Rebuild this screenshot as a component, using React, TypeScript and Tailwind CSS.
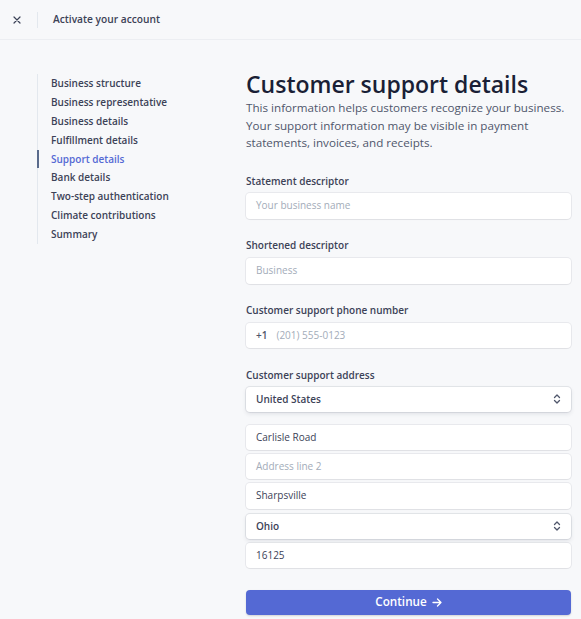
import React from "react";

const font = { fontFamily: '"Open Sans", "Noto Sans", sans-serif' };

function UpDown() {
  return (
    <svg width="8" height="10" viewBox="0 0 8 10" fill="none" stroke="#4f566b" strokeWidth="1.3" strokeLinecap="round" strokeLinejoin="round">
      <path d="M1.5 3.5 L4 1 L6.5 3.5" />
      <path d="M1.5 6.5 L4 9 L6.5 6.5" />
    </svg>
  );
}

function Field({ children, className = "" }: { children: React.ReactNode; className?: string }) {
  return (
    <div
      className={`bg-white rounded-[4px] flex items-center px-[10px] text-[10px] shadow-[0_0_0_1px_rgba(60,66,87,0.08),0_1px_1px_rgba(0,0,0,0.04)] ${className}`}
    >
      {children}
    </div>
  );
}

function SelectField({ value }: { value: string }) {
  return (
    <div className="h-[25px] bg-white rounded-[4px] flex items-center justify-between px-[10px] text-[10px] font-semibold text-[#3c4257] shadow-[0_0_0_1px_rgba(60,66,87,0.10),0_2px_4px_rgba(60,66,87,0.12)]">
      <span>{value}</span>
      <UpDown />
    </div>
  );
}

const steps = [
  "Business structure",
  "Business representative",
  "Business details",
  "Fulfillment details",
  "Support details",
  "Bank details",
  "Two-step authentication",
  "Climate contributions",
  "Summary",
];

export default function App() {
  return (
    <div className="w-[581px] h-[619px] bg-[#f7f8fa] overflow-hidden" style={font}>
      <div className="h-10 flex items-center border-b border-[#eceef2]">
        <div className="w-[33px] flex justify-center">
          <svg width="8" height="8" viewBox="0 0 8 8" stroke="#3c4257" strokeWidth="1.2" strokeLinecap="round">
            <path d="M1 1 L7 7 M7 1 L1 7" />
          </svg>
        </div>
        <div className="ml-[4px] w-px h-[16px] bg-[#e3e8ee]" />
        <div className="ml-[15px] text-[10.2px] font-semibold text-[#3c4257]">Activate your account</div>
      </div>
      <div className="flex">
        <div className="ml-[37px] w-[209px] pt-[34px]">
          <ul className="border-l border-[#e3e8ee]">
            {steps.map((s) => {
              const active = s === "Support details";
              return (
                <li
                  key={s}
                  className={`h-[18.9px] leading-[18.9px] pl-[13px] text-[10px] font-semibold ${
                    active ? "text-[#5469d4] border-l-2 border-[#5a6b8c] -ml-[1px]" : "text-[#3c4257]"
                  }`}
                >
                  <span className={active ? "-ml-[1px]" : ""}>{s}</span>
                </li>
              );
            })}
          </ul>
        </div>
        <div className="w-[325px] pt-[30px]">
          <h1 className="text-[23px] leading-[28px] font-semibold text-[#1a1f36]">Customer support details</h1>
          <p className="mt-[1px] text-[11.65px] leading-[17.5px] text-[#4f566b]">
            This information helps customers recognize your business. Your support information may be visible in payment statements, invoices, and receipts.
          </p>

          <div className="mt-[22px] text-[10px] leading-[14px] font-semibold text-[#3c4257]">Statement descriptor</div>
          <Field className="h-[26px] mt-[5px] text-[#a3acb9]">Your business name</Field>

          <div className="mt-[19px] text-[10px] leading-[14px] font-semibold text-[#3c4257]">Shortened descriptor</div>
          <Field className="h-[26px] mt-[6px] text-[#a3acb9]">Business</Field>

          <div className="mt-[19px] text-[10px] leading-[14px] font-semibold text-[#3c4257]">Customer support phone number</div>
          <Field className="h-[25px] mt-[6px]">
            <span className="text-[#4f566b] font-semibold mr-[9px]">+1</span>
            <span className="text-[#a3acb9]">(201) 555-0123</span>
          </Field>

          <div className="mt-[20px] text-[10px] leading-[14px] font-semibold text-[#3c4257]">Customer support address</div>
          <div className="mt-[5px]">
            <SelectField value="United States" />
          </div>
          <Field className="h-[25px] mt-[13px] text-[#3c4257]">Carlisle Road</Field>
          <Field className="h-[25px] mt-[4px] text-[#a3acb9]">Address line 2</Field>
          <Field className="h-[26px] mt-[4px] text-[#3c4257]">Sharpsville</Field>
          <div className="mt-[5px]">
            <SelectField value="Ohio" />
          </div>
          <Field className="h-[25px] mt-[4px] text-[#3c4257]">16125</Field>

          <button className="mt-[22px] w-full h-[25px] rounded-[4px] bg-[#5469d4] text-white text-[11.7px] font-semibold flex items-center justify-center gap-[5px] shadow-[0_1px_2px_rgba(0,0,0,0.15)]">
            <span>Continue</span>
            <svg width="10" height="9" viewBox="0 0 10 9" fill="none" stroke="white" strokeWidth="1.3" strokeLinecap="round" strokeLinejoin="round">
              <path d="M1 4.5 H9 M5.5 1 L9 4.5 L5.5 8" />
            </svg>
          </button>
        </div>
      </div>
    </div>
  );
}
